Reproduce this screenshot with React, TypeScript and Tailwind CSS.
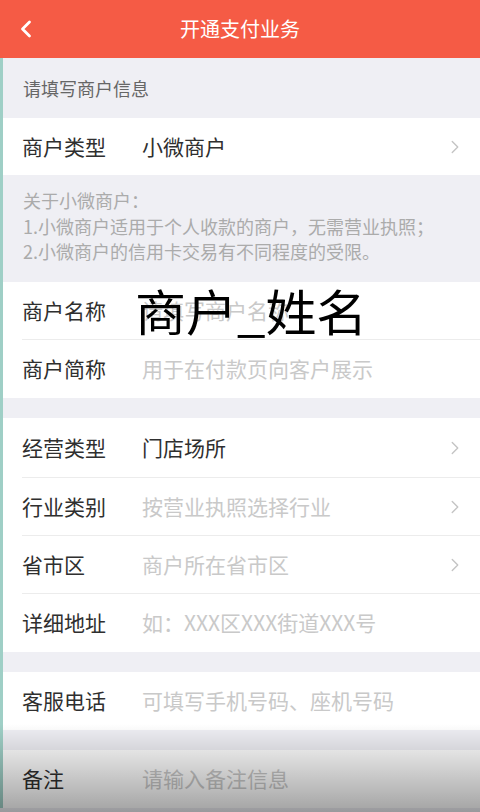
import { ChevronLeft, ChevronRight } from 'lucide-react';

const font = { fontFamily: '"Noto Sans CJK SC", "Noto Sans", sans-serif' };

interface RowProps {
  label: string;
  value?: string;
  placeholder?: string;
  arrow?: boolean;
  divider?: boolean;
  height?: string;
}

function Row({ label, value, placeholder, arrow, divider, height = 'h-[58px]' }: RowProps) {
  return (
    <div className="bg-white pl-[19px]">
      <div className={`flex items-center ${height} pr-[14px] ${divider ? 'border-b border-[#ececec]' : ''}`}>
        <span className="w-[120px] shrink-0 text-[21px] text-[#2f2f2f]">{label}</span>
        {value ? (
          <span className="flex-1 text-[21px] text-[#2f2f2f]">{value}</span>
        ) : (
          <span className="flex-1 text-[21px] text-[#c9c9c9]">{placeholder}</span>
        )}
        {arrow && <ChevronRight className="w-[22px] h-[22px] text-[#c4c4c4]" strokeWidth={1.5} />}
      </div>
    </div>
  );
}

export default function App() {
  return (
    <div className="relative h-[812px] w-[480px] overflow-hidden bg-[#efeff4]" style={font}>
      <header className="relative flex h-[58px] items-center justify-center bg-[#f55b45]">
        <ChevronLeft className="absolute left-[12px] top-[15px] h-[28px] w-[28px] text-white" strokeWidth={2.4} />
        <h1 className="text-[20px] text-white">开通支付业务</h1>
      </header>

      <div className="border-l-[3px] border-[#9fcfc6]">
        <div className="flex h-[60px] items-center pl-[20px] text-[18px] text-[#666666]">请填写商户信息</div>

        <Row label="商户类型" value="小微商户" arrow height="h-[57px]" />

        <div className="h-[107px] px-[20px] pt-[13px] text-[18px] leading-[25.5px] text-[#ababab]">
          <p>关于小微商户：</p>
          <p>1.小微商户适用于个人收款的商户，无需营业执照；</p>
          <p>2.小微商户的信用卡交易有不同程度的受限。</p>
        </div>

        <div className="relative">
          <Row label="商户名称" placeholder="请填写商户名称" divider />
          <span className="absolute left-[132px] top-[-2px] origin-left scale-x-[1.04] text-[49px] leading-[60px] text-black">
            商户_姓名
          </span>
        </div>
        <Row label="商户简称" placeholder="用于在付款页向客户展示" />

        <div className="h-[20px]" />

        <Row label="经营类型" value="门店场所" arrow divider height="h-[60px]" />
        <Row label="行业类别" placeholder="按营业执照选择行业" arrow divider />
        <Row label="省市区" placeholder="商户所在省市区" arrow divider />
        <Row label="详细地址" placeholder="如：XXX区XXX街道XXX号" />

        <div className="h-[20px]" />

        <Row label="客服电话" placeholder="可填写手机号码、座机号码" />

        <div className="h-[20px]" />

        <Row label="备注" placeholder="请输入备注信息" />
      </div>

      <div className="pointer-events-none absolute bottom-0 left-0 h-[88px] w-full bg-linear-to-b from-black/0 via-black/18 to-black/36" />
    </div>
  );
}
